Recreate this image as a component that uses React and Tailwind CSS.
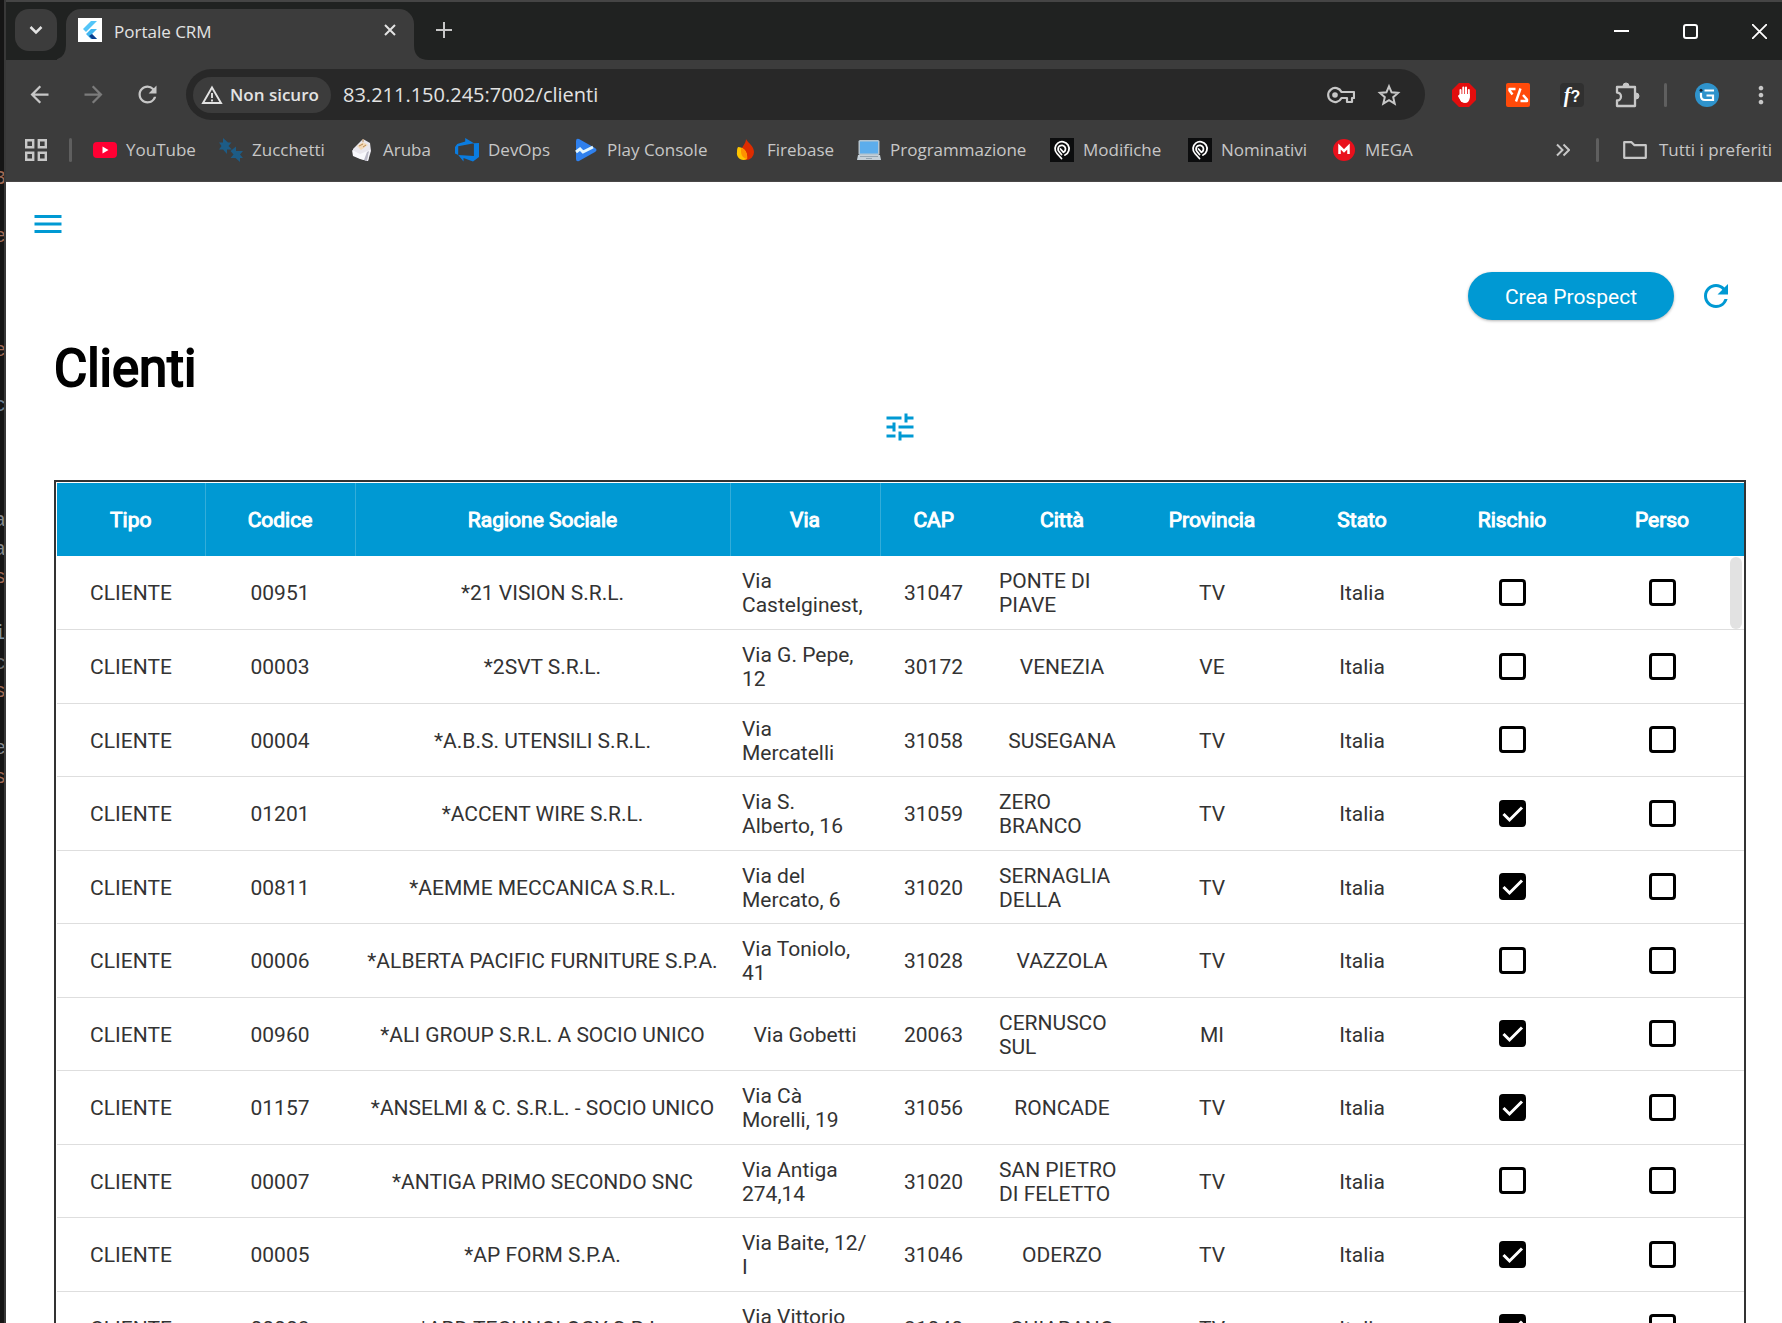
import React from "react";
import { MdMenu, MdRefresh, MdTune, MdArrowBack, MdArrowForward, MdMoreVert } from "react-icons/md";

const customers = [
  ["CLIENTE", "00951", "*21 VISION S.R.L.", "Via\nCastelginest,", "31047", "PONTE DI\nPIAVE", "TV", false],
  ["CLIENTE", "00003", "*2SVT S.R.L.", "Via G. Pepe,\n12", "30172", "VENEZIA", "VE", false],
  ["CLIENTE", "00004", "*A.B.S. UTENSILI S.R.L.", "Via\nMercatelli", "31058", "SUSEGANA", "TV", false],
  ["CLIENTE", "01201", "*ACCENT WIRE S.R.L.", "Via S.\nAlberto, 16", "31059", "ZERO\nBRANCO", "TV", true],
  ["CLIENTE", "00811", "*AEMME MECCANICA S.R.L.", "Via del\nMercato, 6", "31020", "SERNAGLIA\nDELLA", "TV", true],
  ["CLIENTE", "00006", "*ALBERTA PACIFIC FURNITURE S.P.A.", "Via Toniolo,\n41", "31028", "VAZZOLA", "TV", false],
  ["CLIENTE", "00960", "*ALI GROUP S.R.L. A SOCIO UNICO", "Via Gobetti", "20063", "CERNUSCO\nSUL", "MI", true],
  ["CLIENTE", "01157", "*ANSELMI & C. S.R.L. - SOCIO UNICO", "Via Cà\nMorelli, 19", "31056", "RONCADE", "TV", true],
  ["CLIENTE", "00007", "*ANTIGA PRIMO SECONDO SNC", "Via Antiga\n274,14", "31020", "SAN PIETRO\nDI FELETTO", "TV", false],
  ["CLIENTE", "00005", "*AP FORM S.P.A.", "Via Baite, 12/\nI", "31046", "ODERZO", "TV", true],
  ["CLIENTE", "00008", "*ARD TECHNOLOGY S.R.L.", "Via Vittorio\nVeneto", "31040", "CHIARANO", "TV", true],
];

const columns = [
  ["Tipo", "w-[148px]", true],
  ["Codice", "w-[150px]", true],
  ["Ragione Sociale", "w-[375px]", true],
  ["Via", "w-[150px]", true],
  ["CAP", "w-[107px]", false],
  ["Città", "w-[150px]", false],
  ["Provincia", "w-[150px]", false],
  ["Stato", "w-[150px]", false],
  ["Rischio", "w-[150px]", false],
  ["Perso", "w-[150px]", false],
];

const editorGlyphs = [
  ["3", 167, "text-[#a06a55]"],
  ["e", 225, "text-[#a06a55]"],
  ["e", 339, "text-[#a06a55]"],
  ["c", 394, "text-[#6b7f92]"],
  ["a", 509, "text-[#85888c]"],
  ["a", 538, "text-[#85888c]"],
  ["s", 566, "text-[#a06a55]"],
  ["i", 622, "text-[#7d93a0]"],
  ["c", 652, "text-[#707070]"],
  ["s", 680, "text-[#a06a55]"],
  ["e", 737, "text-[#85888c]"],
  ["s", 766, "text-[#a06a55]"],
];

function FlutterIcon() {
  return (
    <svg viewBox="0 0 24 24" className="size-6 shrink-0">
      <rect width="24" height="24" fill="#fff" />
      <path d="M13 3h6L8 14l-3-3z" fill="#54c5f8" />
      <path d="M13 11h6l-5 5 5 5h-6l-5-5z" fill="#40b6f0" />
      <path d="M11 18l3-2 5 5h-5z" fill="#0d3c8c" />
    </svg>
  );
}

function YouTubeIcon() {
  return (
    <svg viewBox="0 0 24 24" className="size-6">
      <rect y="4" width="24" height="16" rx="4" fill="#ff0033" />
      <path d="M9.500 8.500v7l6-3.500z" fill="#fff" />
    </svg>
  );
}

function ZucchettiIcon() {
  return (
    <svg viewBox="0 0 24 24" className="size-6" fill="#1d5c86">
      <path d="M0 4.500h4V0l5 4.500h3.500L9.500 8l3.500 3.500H8V16l-4-4.500H0L2.500 8z" />
      <path d="M11.500 13l5.500-4.500V13h7l-3 3.500 3 3.500h-3v4l-4.500-4h-5l3-3.500z" />
    </svg>
  );
}

function ArubaIcon() {
  return (
    <svg viewBox="0 0 24 24" className="size-6">
      <path d="M3 11L13 1l7 4 1 8-3 10-7-2-8-4z" fill="#e9e7ee" />
      <path d="M2 12l8 4 10-4-2 11-8-2-7-3z" fill="#f8f8fc" />
      <path d="M7 8l6-4 5 3-7 5z" fill="#f2d9b8" />
      <path d="M9 8l4-2M13 9l3-2M13 1v3" stroke="#b98b57" strokeWidth="1" />
      <path d="M17 14l2-1-2 10-3-1z" fill="#b9b8c6" />
    </svg>
  );
}

function DevOpsIcon() {
  return (
    <svg viewBox="0 0 24 24" className="size-6" fill="#0a7ce0">
      <path d="M24 5v14l-6 4.500L8.500 20v3.500L3.200 16.900l15.700 1.200V5.200zM19 5.300L10.200 0v3.500L2.200 6 0 9v6.500l3.200 1.400V8.200z" />
    </svg>
  );
}

function PlayConsoleIcon() {
  return (
    <svg viewBox="0 0 24 24" className="size-6">
      <path d="M2 3q0-3 3-2l16 9q3 2 0 4L5 23q-3 1-3-2z" fill="#2f80ed" />
      <path d="M2 14l4-3 3 3 10-5" fill="none" stroke="#e3f6ff" strokeWidth="3" />
    </svg>
  );
}

function FirebaseIcon() {
  return (
    <svg viewBox="0 0 24 24" className="size-6">
      <path d="M12 1c2 4 8 7 8 13a8 8 0 0 1-8 8c-4 0-6-4-5-8 0-5 5-8 5-13z" fill="#dd2c00" />
      <path d="M4 9c5 0 10 4 9 12-6 3-11-2-10-7 0-2 0-3 1-5z" fill="#ffc400" />
      <path d="M7.200 10c4 1 6.500 5 6 11-5-1-7-5-6-11z" fill="#ff9100" />
    </svg>
  );
}

function LaptopIcon() {
  return (
    <svg viewBox="0 0 24 24" className="size-6">
      <rect x="1.500" y="2" width="21" height="15" rx="1.500" fill="#b4c4cf" />
      <rect x="3" y="3.500" width="18" height="12" fill="#5cadec" />
      <path d="M1 17h22l1 5H0z" fill="#c5d0d8" />
      <path d="M3 18.500h18M9 20.500h6" stroke="#93a4b0" strokeWidth="1.200" />
    </svg>
  );
}

function SpiralIcon() {
  return (
    <svg viewBox="0 0 24 24" className="size-6">
      <rect width="24" height="24" fill="#0c0d0e" />
      <path d="M11.500 20.500L7 15.500A7 7 0 1 1 15 17M11.500 16.500L9 13.500A3.700 3.700 0 1 1 13.500 14.300L10.500 11" fill="none" stroke="#fff" strokeWidth="1.800" strokeLinecap="round" strokeLinejoin="round" />
    </svg>
  );
}

function MegaIcon() {
  return (
    <svg viewBox="0 0 24 24" className="size-6">
      <circle cx="12" cy="12" r="11" fill="#e9101c" />
      <path d="M7.500 16V8.500l4.500 4.500 4.500-4.500V16" fill="none" stroke="#fff" strokeWidth="2.500" />
    </svg>
  );
}

const bookmarks = [
  ["YouTube", YouTubeIcon, "w-[126px]"],
  ["Zucchetti", ZucchettiIcon, "w-[131px]"],
  ["Aruba", ArubaIcon, "w-[105px]"],
  ["DevOps", DevOpsIcon, "w-[119px]"],
  ["Play Console", PlayConsoleIcon, "w-[160px]"],
  ["Firebase", FirebaseIcon, "w-[123px]"],
  ["Programmazione", LaptopIcon, "w-[193px]"],
  ["Modifiche", SpiralIcon, "w-[138px]"],
  ["Nominativi", SpiralIcon, "w-[144px]"],
  ["MEGA", MegaIcon, "w-[90px]"],
];

function TabStrip() {
  return (
    <div className="flex h-[58px] items-end bg-[#202221] pl-[9px]">
      <button aria-label="Cerca schede" className="mb-[9px] grid size-[42px] place-items-center rounded-[14px] bg-[#3c3c3c]">
        <svg viewBox="0 0 14 14" className="size-[14px]" fill="none" stroke="#e3e3e3" strokeWidth="2.500">
          <path d="M1.500 4l5.500 5.500L12.500 4" />
        </svg>
      </button>
      <svg viewBox="0 0 9 15" className="h-[15px] w-[9px]" fill="#3c3c3c">
        <path d="M9 0v15H-6Q9 15 9 0z" />
      </svg>
      <div className="flex h-[51px] w-[348px] items-center rounded-t-[15px] bg-[#3c3c3c] pr-4 pb-[9px] pl-3 text-[#e3e3e3]">
        <FlutterIcon />
        <span className="ml-3 flex-1 pt-[3px] text-[17px]">Portale CRM</span>
        <button aria-label="Chiudi scheda" className="grid size-4 place-items-center">
          <svg viewBox="0 0 12 12" className="size-3" stroke="#e3e3e3" strokeWidth="2">
            <path d="M1 1l10 10M11 1L1 11" />
          </svg>
        </button>
      </div>
      <svg viewBox="0 0 15 15" className="size-[15px]" fill="#3c3c3c">
        <path d="M0 0v15h15Q0 15 0 0z" />
      </svg>
      <button aria-label="Nuova scheda" className="mb-[22px] ml-[7px] size-4">
        <svg viewBox="0 0 16 16" className="size-4" stroke="#c7c7c7" strokeWidth="2">
          <path d="M8 0v16M0 8h16" />
        </svg>
      </button>
      <div className="mb-[21px] ml-auto flex items-center gap-[54px] pr-[15px]">
        <button aria-label="Riduci a icona" className="size-[15px]">
          <svg viewBox="0 0 15 15" className="size-[15px]" stroke="#fff" strokeWidth="2">
            <path d="M0 7h15" />
          </svg>
        </button>
        <button aria-label="Ingrandisci" className="size-[15px] rounded-[3px] border-2 border-white" />
        <button aria-label="Chiudi" className="size-[15px]">
          <svg viewBox="0 0 15 15" className="size-[15px]" stroke="#fff" strokeWidth="1.800">
            <path d="M0 0l15 15M15 0L0 15" />
          </svg>
        </button>
      </div>
    </div>
  );
}

function Toolbar() {
  return (
    <div className="flex h-[69px] items-center pl-5 text-[#c7c7c7]">
      <button aria-label="Indietro" className="mr-[27px]"><MdArrowBack size={27} /></button>
      <button aria-label="Avanti" className="mr-[27px] text-[#7b7b7b]"><MdArrowForward size={27} /></button>
      <button aria-label="Ricarica"><MdRefresh size={27} /></button>
      <div className="ml-[25px] flex h-[51px] flex-1 items-center rounded-full bg-[#282828] pr-6 pl-[7px]">
        <button className="flex h-9 w-[138px] items-center gap-[7px] rounded-full bg-[#3c3c3c] pl-2 text-[17px] font-semibold whitespace-nowrap text-[#e3e3e3]">
          <svg viewBox="0 0 22 22" className="size-[22px]" fill="none" stroke="#e3e3e3" strokeWidth="1.900">
            <path d="M11 3.500L20 19H2z" />
            <path d="M11 9v5M11 15.500v2" />
          </svg>
          Non sicuro
        </button>
        <input
          aria-label="Indirizzo"
          defaultValue="83.211.150.245:7002/clienti"
          className="ml-3 min-w-0 flex-1 bg-transparent text-[20px] text-[#e3e3e3] outline-none"
        />
        <button aria-label="Password" className="mr-[22px]">
          <svg viewBox="0 0 28 20" className="h-5 w-7" fill="none" stroke="#c7c7c7" strokeWidth="2.200">
            <path d="M14.500 7A7 7 0 1 0 14.500 13H20v4h5v-4h2V7z" strokeLinejoin="round" />
            <circle cx="8" cy="10" r="2.800" fill="#c7c7c7" stroke="none" />
          </svg>
        </button>
        <button aria-label="Aggiungi ai preferiti">
          <svg viewBox="0 0 24 24" className="size-6" fill="none" stroke="#c7c7c7" strokeWidth="2">
            <path d="M12 3.300l2.600 6 6.500.6-4.900 4.300 1.500 6.400-5.700-3.400-5.700 3.400 1.500-6.400-4.900-4.300 6.500-.6z" />
          </svg>
        </button>
      </div>
      <div className="ml-[27px] flex items-center gap-[30px]">
        <button aria-label="AdBlock">
          <svg viewBox="0 0 24 24" className="size-6">
            <path d="M7 0h10l7 7v10l-7 7H7l-7-7V7z" fill="#e30d0d" />
            <path d="M8.500 14V7M11.300 12V4.500M14 12V4.500M16.800 14V7M7 13l3 5" stroke="#fff" strokeWidth="2" strokeLinecap="round" />
            <path d="M7.500 11h10.300v4q-.8 5-4.800 5t-5.500-5z" fill="#fff" />
          </svg>
        </button>
        <button aria-label="Strumenti codice">
          <svg viewBox="0 0 24 24" className="size-6">
            <rect width="24" height="24" rx="2" fill="#ff4a0a" />
            <path d="M9.500 6H3.500v1.500l3 4M14.500 5.500l-4.500 13M17 12l4 4.500V18h-6.500" fill="none" stroke="#fff" strokeWidth="2.400" strokeLinejoin="round" />
          </svg>
        </button>
        <button aria-label="Trova font" className="size-6 rounded bg-[#303030] font-['Liberation_Serif',serif] text-[20px] leading-6 font-bold whitespace-nowrap text-white italic">
          f<span className="font-['Liberation_Sans',sans-serif] text-[16px] not-italic">?</span>
        </button>
        <button aria-label="Estensioni">
          <svg viewBox="0 0 26 26" className="size-[26px]" fill="none" stroke="#c7c7c7" strokeWidth="2.300" strokeLinejoin="round">
            <path d="M3 5h18v19H3v-5.500a4 4 0 0 0 0-8z" />
            <path d="M9 4a3 3 0 0 1 6 0zM22 11a3 3 0 0 1 0 6z" fill="#c7c7c7" strokeWidth="1" />
          </svg>
        </button>
      </div>
      <div className="mr-[28px] ml-6 h-6 w-[3px] rounded bg-[#5f5f5f]" />
      <button aria-label="Profilo">
        <svg viewBox="0 0 24 24" className="size-6">
          <circle cx="12" cy="12" r="12" fill="#2f93cc" />
          <path d="M9.500 7.500h9.500M6 10v3q0 4 4 4h8v-4.500h-6.500" fill="none" stroke="#fff" strokeWidth="2.200" />
          <circle cx="6" cy="7.300" r="1.500" fill="#123" />
        </svg>
      </button>
      <button aria-label="Menu Chrome" className="mr-[7px] ml-7">
        <MdMoreVert size={28} />
      </button>
    </div>
  );
}

function BookmarksBar() {
  return (
    <nav className="flex h-[53px] items-center border-b border-[#4a4747] pb-[10px] text-[17px] whitespace-nowrap text-[#c7c7c7]">
      <button aria-label="App" className="ml-[19px]">
        <svg viewBox="0 0 22 22" className="size-[22px]" fill="none" stroke="#c7c7c7" strokeWidth="2.400">
          <path d="M1.200 1.200h7v7h-7zM13.800 1.200h7v7h-7zM1.200 13.800h7v7h-7zM13.800 13.800h7v7h-7z" />
        </svg>
      </button>
      <div className="mr-[21px] ml-[22px] h-6 w-[3px] rounded bg-[#5f5f5f]" />
      {bookmarks.map(([name, Icon, width]) => (
        <a key={name} href="#" className={"flex shrink-0 items-center gap-[9px] " + width}>
          <Icon />
          {name}
        </a>
      ))}
      <button aria-label="Altri preferiti" className="ml-auto">
        <svg viewBox="0 0 14 14" className="size-[14px]" fill="none" stroke="#c7c7c7" strokeWidth="2">
          <path d="M1 1.500L6.500 7 1 12.500M7.500 1.500L13 7l-5.500 5.500" />
        </svg>
      </button>
      <div className="mr-6 ml-[26px] h-6 w-[3px] rounded bg-[#5f5f5f]" />
      <button className="mr-[10px] flex items-center gap-3">
        <svg viewBox="0 0 24 24" className="size-6" fill="none" stroke="#c7c7c7" strokeWidth="2.200" strokeLinejoin="round">
          <path d="M1.200 4.200h7.300l3 3h11.300v12.600H1.200z" />
        </svg>
        Tutti i preferiti
      </button>
    </nav>
  );
}

function CheckCell({ label, checked }) {
  return (
    <td className="p-0">
      <label className="relative mx-auto block size-[27px]">
        <input
          type="checkbox"
          aria-label={label}
          defaultChecked={checked}
          className="peer block size-[27px] appearance-none rounded-[4px] border-[3px] border-black checked:bg-black"
        />
        <svg viewBox="0 0 27 27" className="pointer-events-none absolute inset-0 hidden peer-checked:block" fill="none" stroke="#fff" strokeWidth="3">
          <path d="M4.500 14l6 6L23 7.500" />
        </svg>
      </label>
    </td>
  );
}

function TextCell({ value }) {
  const wrapped = value.includes("\n");
  return (
    <td className="px-3 pt-[2px] pb-0">
      <div className={wrapped ? "text-left whitespace-pre" : "text-center whitespace-nowrap"}>{value}</div>
    </td>
  );
}

function CustomerTable() {
  return (
    <div className="relative mt-[35px] border-2 border-b-0 border-black/80 bg-white pt-px pl-px">
      <table className="w-full table-fixed border-collapse text-[21px] leading-6 text-[#333333]">
        <colgroup>
          {columns.map(([name, width]) => (
            <col key={name} className={width} />
          ))}
          <col />
        </colgroup>
        <thead>
          <tr className="h-[73px] bg-[#0099d3] text-white">
            {columns.map(([name, , divider]) => (
              <th key={name} scope="col" className={"p-0 font-normal [-webkit-text-stroke:1px_white] " + (divider ? "border-r border-[#33add9]" : "")}>
                {name}
              </th>
            ))}
            <td />
          </tr>
        </thead>
        <tbody>
          {customers.map((c) => (
            <tr key={c[1]} className="border-b border-[#dedede] odd:h-[73px] even:h-[74px]">
              {c.slice(0, 7).map((value, i) => (
                <TextCell key={i} value={value} />
              ))}
              <TextCell value="Italia" />
              <CheckCell label={"Rischio " + c[2]} checked={c[7]} />
              <CheckCell label={"Perso " + c[2]} checked={false} />
              <td />
            </tr>
          ))}
        </tbody>
      </table>
      <div className="absolute top-[75px] right-[2px] h-[72px] w-3 rounded-full bg-[#e2e2e2]" />
    </div>
  );
}

export default function App() {
  return (
    <div className="flex h-screen overflow-hidden bg-[#3c3c3c]">
      <aside aria-hidden="true" className="relative w-[6px] shrink-0 overflow-hidden border-r-2 border-[#383838] bg-[#151515] font-['Liberation_Mono',monospace] text-[20px] leading-6">
        {editorGlyphs.map(([glyph, top, color]) => (
          <span key={top} className={"absolute right-[-2px] " + color} style={{ top }}>
            {glyph}
          </span>
        ))}
      </aside>
      <div className="flex min-w-0 flex-1 flex-col">
        <header className="shrink-0 border-t-2 border-[#454545] bg-[#3c3c3c] font-['Open_Sans',sans-serif]">
          <TabStrip />
          <Toolbar />
          <BookmarksBar />
        </header>
        <main className="min-h-0 flex-1 overflow-hidden bg-white pt-6 pr-9 pl-12 font-['Roboto',sans-serif]">
          <button aria-label="Apri menu" className="-ml-6 block text-[#0099d3]">
            <MdMenu size={36} />
          </button>
          <div className="mt-[30px] flex items-center justify-end gap-6 pr-3">
            <button className="h-12 rounded-full bg-[#0099d3] px-[37px] pt-[3px] text-[21px] text-white shadow-[0_1px_3px_rgba(0,0,0,0.3)]">
              Crea Prospect
            </button>
            <button aria-label="Aggiorna" className="text-[#0099d3]">
              <MdRefresh size={36} />
            </button>
          </div>
          <h1 className="mt-[17px] text-[51px] leading-[64px] text-black [-webkit-text-stroke:2px_black]">Clienti</h1>
          <button aria-label="Filtri" className="mx-auto mt-2 block text-[#0099d3]">
            <MdTune size={36} />
          </button>
          <CustomerTable />
        </main>
      </div>
    </div>
  );
}
